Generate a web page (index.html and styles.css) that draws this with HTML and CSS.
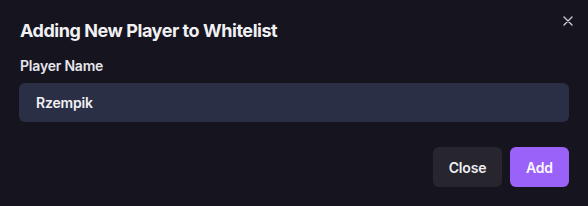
FILE: index.html
```html
<!DOCTYPE html>
<html>
<head>
<meta charset="utf-8">
<link rel="stylesheet" href="styles.css">
</head>
<body>
<div class="modal">
  <button class="close-x" aria-label="Close">
    <svg width="10" height="10" viewBox="0 0 10 10"><path d="M1 1L9 9M9 1L1 9" stroke="#c9c9d1" stroke-width="1.4" stroke-linecap="round"/></svg>
  </button>
  <h2 class="title">Adding New Player to Whitelist</h2>
  <label class="label">Player Name</label>
  <div class="input">Rzempik</div>
  <div class="actions">
    <button class="btn btn-close">Close</button>
    <button class="btn btn-add">Add</button>
  </div>
</div>
</body>
</html>
```
FILE: styles.css
```css
html, body { margin: 0; padding: 0; background: #16151f; }
body { width: 588px; height: 206px; overflow: hidden; font-family: Inter, "Noto Sans", sans-serif; color: #ececf1; }
.modal { position: relative; padding: 19px 19px 0 19px; display: flex; flex-direction: column; }
.close-x { position: absolute; top: 16px; right: 15px; background: none; border: 0; padding: 0; width: 10px; height: 10px; display: flex; }
.title { margin: 0 0 0 1px; font-size: 18px; font-weight: 700; line-height: 24px; letter-spacing: -0.45px; color: #f1f1f4; }
.label { margin: 14px 0 0 1px; font-size: 14px; font-weight: 600; line-height: 18px; letter-spacing: -0.2px; color: #e6e6ec; }
.input { margin-top: 8px; height: 39px; border-radius: 6px; background: #2a2f45; font-size: 14px; font-weight: 600; line-height: 39px; padding-left: 17px; letter-spacing: -0.2px; color: #f1f1f5; }
.actions { display: flex; justify-content: flex-end; gap: 8px; margin-top: 25px; }
.btn { border: 0; height: 40px; border-radius: 6px; font-family: inherit; font-size: 14px; font-weight: 600; letter-spacing: -0.2px; color: #eeeef2; padding: 0; }
.btn-close { width: 69px; background: #27262f; }
.btn-add { width: 59px; background: #9b62fa; color: #fbf8ff; }
```
